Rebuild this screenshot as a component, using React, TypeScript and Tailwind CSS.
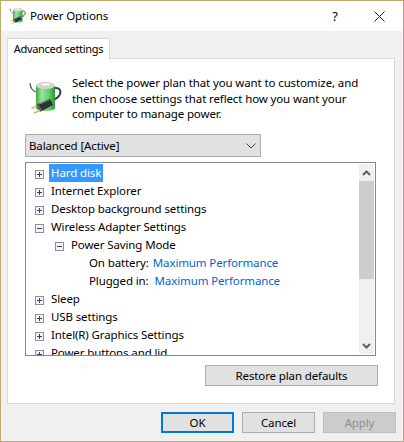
import React from "react";

const font = "font-['Noto_Sans',sans-serif]";

const BatteryIcon = ({ size, id }: { size: number; id: string }) => (
  <svg width={size} height={size} viewBox="8 10 36 36">
    <defs>
      <linearGradient id={id} x1="0" y1="0" x2="1" y2="0">
        <stop offset="0" stopColor="#43a34a" />
        <stop offset="0.3" stopColor="#9be69b" />
        <stop offset="0.7" stopColor="#61cc68" />
        <stop offset="1" stopColor="#2f913d" />
      </linearGradient>
    </defs>
    <path d="M10 13 C10.500 18 12.500 21 16 22" fill="none" stroke="#4d5964" strokeWidth="1.300" />
    <path d="M35 18 C41 17.500 42 23 38 27 C36 29 34 30 31 31" fill="none" stroke="#3d4047" strokeWidth="2" />
    <path d="M16 15 H35 V38 C35 42 16 42 16 38 Z" fill={`url(#${id})`} />
    <ellipse cx="25.500" cy="15.500" rx="9.500" ry="3.500" fill="#d3d8cf" />
    <ellipse cx="25.500" cy="14.500" rx="5" ry="2" fill="#f4f5f0" stroke="#a9b0a4" strokeWidth="0.500" />
    <path d="M18 34 L30 28.500 L33 35 L22 41 Z" fill="#2f3137" />
    <path d="M19.500 34 L30 29.500" stroke="#858a90" strokeWidth="1" />
    <path d="M18 34 L22 41 L20 42 L16 35 Z" fill="#5a5c62" />
    <path d="M17 36 L11.500 38.500 M20 40.500 L14 43" stroke="#dcb75c" strokeWidth="1.800" />
  </svg>
);

const PlusBox = ({ open }: { open?: boolean }) => (
  <svg width="9" height="9" viewBox="0 0 9 9" className="mt-[3px] shrink-0">
    <rect x="0.500" y="0.500" width="8" height="8" fill="#f4f4f6" stroke="#8e8f8f" />
    <path d={open ? "M2 4.500H7" : "M2 4.500H7M4.500 2V7"} stroke="#2f3f7f" />
  </svg>
);

const Row = ({ label, open, indent, selected }: { label: string; open?: boolean; indent?: boolean; selected?: boolean }) => (
  <div className={`flex h-[18px] shrink-0 items-center ${indent ? "pl-[29px]" : "pl-[9px]"}`}>
    <PlusBox open={open} />
    {selected ? (
      <span className="ml-[5px] flex h-[18px] items-center bg-[#3399ff] px-[2px] text-white">{label}</span>
    ) : (
      <span className="ml-[7px] text-black">{label}</span>
    )}
  </div>
);

const Setting = ({ label, value, gap }: { label: string; value: string; gap: string }) => (
  <div className="flex h-[18px] shrink-0 items-center whitespace-pre pl-[63px]">
    <span className="text-black">{label}</span>
    <span className={`${gap} text-[#0066cc]`}>{value}</span>
  </div>
);

const Btn = ({ label, primary, disabled }: { label: string; primary?: boolean; disabled?: boolean }) => (
  <div
    className={`flex h-[21px] w-[73px] items-center justify-center ${
      primary
        ? "border-2 border-[#0078d7] bg-[#e1e1e1] text-black"
        : disabled
          ? "border border-[#bfbfbf] bg-[#cccccc] text-[#8f8f8f]"
          : "border border-[#adadad] bg-[#e1e1e1] text-black"
    }`}
  >
    {label}
  </div>
);

export default function App() {
  return (
    <div className={`${font} flex h-[442px] w-[404px] flex-col border border-[#c1a96a] text-[11.5px] leading-[16px] tracking-[-0.12px]`}>
      {/* title bar */}
      <div className="flex h-[30px] shrink-0 items-center bg-white pl-[8px]">
        <BatteryIcon size={18} id="cell-small" />
        <span className="ml-[3px] text-black">Power Options</span>
        <span className="ml-auto w-[16px] text-center text-[13px]">?</span>
        <svg width="11" height="11" viewBox="0 0 11 11" className="ml-[31px] mr-[18px]">
          <path d="M0.500 0.500L10.500 10.500M10.500 0.500L0.500 10.500" stroke="#222" />
        </svg>
      </div>

      {/* body */}
      <div className="flex flex-1 flex-col bg-[#f0f0f0] pt-[7px] pl-[6px] pr-[8px]">
        <div className="z-10 -mb-px flex h-[21px] w-[103px] items-center justify-center whitespace-nowrap border border-b-0 border-[#d9d9d9] bg-white text-[11px] tracking-[-0.3px] text-black">
          Advanced settings
        </div>
        <div className="flex h-[346px] flex-col border border-[#d9d9d9] bg-white pt-[16px] pl-[17px] pr-[17px]">
          <div className="flex h-[54px]">
            <div className="ml-[3px] mt-[5px] w-[41px] shrink-0">
              <BatteryIcon size={36} id="cell-large" />
            </div>
            <p className="ml-[3px] w-[295px] leading-[15.5px] text-black">
              Select the power plan that you want to customize, and then choose settings that reflect how you want your computer to manage power.
            </p>
          </div>
          <div className="mt-[5px] flex h-[23px] w-[236px] items-center justify-between border border-[#adadad] bg-[#e1e1e1] pl-[3px] pr-[4px] text-black">
            Balanced [Active]
            <svg width="10" height="6" viewBox="0 0 10 6">
              <path d="M0.500 0.500L5 5L9.500 0.500" fill="none" stroke="#444" />
            </svg>
          </div>
          <div className="mt-[5px] flex h-[194px] w-[351px] border border-[#828790] bg-white">
            <div className="flex min-w-0 flex-1 flex-col overflow-hidden pt-[1px]">
              <Row label="Hard disk" selected />
              <Row label="Internet Explorer" />
              <Row label="Desktop background settings" />
              <Row label="Wireless Adapter Settings" open />
              <Row label="Power Saving Mode" open indent />
              <Setting label="On battery:" value="Maximum Performance" gap="ml-[4px]" />
              <Setting label="Plugged in:" value="Maximum Performance" gap="ml-[6px]" />
              <Row label="Sleep" />
              <Row label="USB settings" />
              <Row label="Intel(R) Graphics Settings" />
              <Row label="Power buttons and lid" />
            </div>
            <div className="my-px mr-px flex w-[15px] shrink-0 flex-col bg-[#f0f0f0]">
              <div className="flex h-[17px] items-center justify-center">
                <svg width="9" height="6" viewBox="0 0 9 6">
                  <path d="M1 5L4.500 1.500L8 5" fill="none" stroke="#606060" strokeWidth="2" />
                </svg>
              </div>
              <div className="h-[98px] bg-[#cdcdcd]" />
              <div className="mt-auto flex h-[17px] items-center justify-center">
                <svg width="9" height="6" viewBox="0 0 9 6">
                  <path d="M1 1L4.500 4.500L8 1" fill="none" stroke="#606060" strokeWidth="2" />
                </svg>
              </div>
            </div>
          </div>
          <div className="ml-[180px] mt-[9px] flex h-[21px] w-[173px] items-center justify-center border border-[#adadad] bg-[#e1e1e1] text-black">
            Restore plan defaults
          </div>
        </div>
        <div className="-mr-px mt-[8px] flex justify-end gap-[8px]">
          <Btn label="OK" primary />
          <Btn label="Cancel" />
          <Btn label="Apply" disabled />
        </div>
      </div>
    </div>
  );
}
